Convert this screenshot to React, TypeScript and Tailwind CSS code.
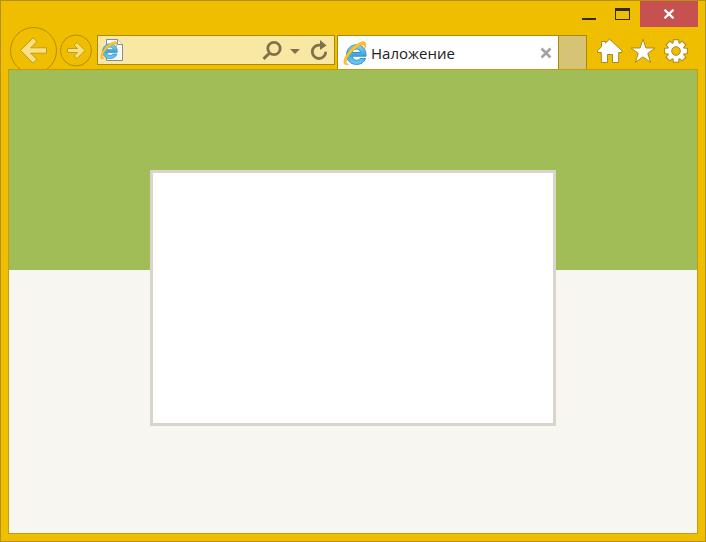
import React from "react";

function ExplorerMark() {
  return (
    <>
      <defs>
        <linearGradient id="explorerBlue" x1="0" y1="0" x2="0" y2="1">
          <stop offset="0" stopColor="#8ad8f5" />
          <stop offset="0.5" stopColor="#3fa9df" />
          <stop offset="1" stopColor="#6fd0f3" />
        </linearGradient>
      </defs>
      <path
        d="M23 15.200H9.200c.3 2.500 2 4 4.300 4 1.700 0 2.900-.6 3.700-1.800h5.300c-1.300 3.900-4.600 6-9.100 6-5.900 0-9.800-4-9.800-9.600S7.600 3.800 13.400 3.800c6.100 0 10 4.400 9.600 11.400zM9.300 11.500h8.200c-.3-2.200-1.900-3.500-4.100-3.500s-3.800 1.300-4.100 3.500z"
        fill="url(#explorerBlue)"
        stroke="#2c86bd"
        strokeWidth="0.9"
      />
      <path
        d="M5.500 23.300C.5 25.500-.3 20.600 2.800 15 6.300 8.700 13 2.700 18.300 1.100c3.700-1.100 5.300.8 4.300 4.400-.2.800-.4 1.300-.8 2 .3-2.800-.4-4-2.600-3.500C14.800 5 8.100 10.700 4.900 16.200c-2.200 3.800-2.200 6.500.6 7.100z"
        fill="#fdc62c"
        stroke="#e3a41b"
        strokeWidth="0.5"
      />
    </>
  );
}

function TitleBar() {
  return (
    <header className="flex h-[26px] justify-end">
      <button type="button" aria-label="Свернуть" className="flex w-[34px] items-center justify-center">
        <svg width="34" height="26" aria-hidden="true">
          <path d="M10 17h14v2H10z" fill="#302b22" />
        </svg>
      </button>
      <button type="button" aria-label="Развернуть" className="flex w-[34px] items-center justify-center">
        <svg width="34" height="26" aria-hidden="true">
          <path d="M9 7h15v12H9zM10 10v8h13v-8z" fill="#302b22" fillRule="evenodd" />
        </svg>
      </button>
      <button type="button" aria-label="Закрыть" className="flex w-[58px] items-center justify-center bg-[#c75050]">
        <svg width="12" height="10" viewBox="0 0 12 10" aria-hidden="true">
          <path d="M1.500 .7L10.500 9.300M10.500 .7L1.500 9.300" stroke="#fff" strokeWidth="2.300" />
        </svg>
      </button>
    </header>
  );
}

function AddressBar() {
  return (
    <div className="mt-2 flex h-[30px] min-w-0 flex-1 items-center border border-[#ad8908] bg-[#f9e7a4]">
      <svg width="28" height="28" viewBox="0 0 28 28" className="shrink-0" aria-hidden="true">
        <path d="M8.500 3.500h11l5 5v16h-16z" fill="#f6f8fb" stroke="#8c8c8c" />
        <path d="M19.500 3.500v5h5" fill="#fff" stroke="#8c8c8c" />
        <svg x="2" y="5" width="18" height="18" viewBox="0 0 24 24">
          <ExplorerMark />
        </svg>
      </svg>
      <input type="text" aria-label="Адрес" className="h-full min-w-0 flex-1 bg-transparent px-1 text-sm outline-none" />
      <button type="button" aria-label="Поиск" className="shrink-0">
        <svg width="24" height="28" viewBox="0 0 24 28" aria-hidden="true">
          <circle cx="12" cy="12.500" r="6.200" fill="none" stroke="#7f7248" strokeWidth="2.800" />
          <path d="M7.600 17L1.500 22.800" stroke="#7f7248" strokeWidth="3" />
        </svg>
      </button>
      <button type="button" aria-label="Журнал" className="shrink-0">
        <svg width="22" height="28" viewBox="0 0 22 28" aria-hidden="true">
          <path d="M4 13h10l-5 5z" fill="#7f7248" />
        </svg>
      </button>
      <button type="button" aria-label="Обновить" className="shrink-0">
        <svg width="26" height="28" viewBox="0 0 26 28" aria-hidden="true">
          <path d="M13 9.100h-2a6.700 6.700 0 1 0 6.700 6.700" fill="none" stroke="#7f7248" strokeWidth="2.800" />
          <path d="M12 4l6.500 5.500L12 14z" fill="#7f7248" />
        </svg>
      </button>
    </div>
  );
}

const gearAngles = [0, 45, 90, 135, 180, 225, 270, 315];

function GearTeeth() {
  return (
    <>
      <circle cx="14" cy="16" r="8" />
      {gearAngles.map((angle) => (
        <path key={angle} d="M11.500 9l.3-3.800h4.400l.3 3.800z" transform={`rotate(${angle} 14 16)`} />
      ))}
    </>
  );
}

function Toolbar() {
  return (
    <nav aria-label="Навигация" className="flex h-[42px] items-start overflow-hidden pl-0.5">
      <button type="button" aria-label="Назад" className="shrink-0">
        <svg width="47" height="47" viewBox="0 0 47 47" aria-hidden="true">
          <circle cx="23.500" cy="23.500" r="23" fill="none" stroke="#b28d06" />
          <path
            d="M10.500 23.500L23 10.900l3.900 3.700-6.200 6.200H36.500v5.400H20.700l6.200 6.200L23 36.100z"
            fill="#f9e085"
            stroke="#c29d18"
          />
        </svg>
      </button>
      <button type="button" aria-label="Вперёд" className="mt-[7px] ml-[3px] shrink-0">
        <svg width="32" height="33" viewBox="0 0 32 33" aria-hidden="true">
          <circle cx="16" cy="16.500" r="15.500" fill="none" stroke="#b28d06" />
          <path
            d="M25 16.500L17 8.500l-2.900 2.700 3.400 3.300H7.500v4h10l-3.400 3.300 2.900 2.700z"
            fill="#f9e085"
            stroke="#c29d18"
          />
        </svg>
      </button>
      <div className="ml-[5px] flex min-w-0 flex-1 gap-0.5">
        <AddressBar />
        <div className="mt-2 flex h-[34px] shrink-0">
          <div className="flex w-[222px] items-center border border-b-0 border-[#ad8908] bg-white pl-[5px]">
            <svg viewBox="0 0 24 24" className="size-6 shrink-0" aria-hidden="true">
              <ExplorerMark />
            </svg>
            <span className="flex-1 truncate pl-1 font-['Open_Sans','Noto_Sans',sans-serif] text-[15px] leading-5 text-[#222]">
              Наложение
            </span>
            <button type="button" aria-label="Закрыть вкладку" className="flex w-6 justify-center">
              <svg width="12" height="12" viewBox="0 0 12 12" aria-hidden="true">
                <path d="M1.500 1.500l9 9M10.500 1.500l-9 9" stroke="#a3a3a3" strokeWidth="2.600" />
              </svg>
            </button>
          </div>
          <button
            type="button"
            aria-label="Новая вкладка"
            className="w-7 border border-b-0 border-l-0 border-[#ad8908] bg-[#d7c376]"
          />
        </div>
      </div>
      <div className="mt-2 ml-[9px] flex shrink-0 gap-[5px] pr-2">
        <button type="button" aria-label="Домой">
          <svg width="28" height="32" viewBox="0 0 28 32" aria-hidden="true">
            <path
              d="M13.500 4.200L9.500 8V6.500h-4v5.300L1.500 15.700v1.800h3.800v10h6.200v-8h5v8h6.200v-10h3.300v-1.800z"
              fill="#fff"
              stroke="#a98921"
            />
          </svg>
        </button>
        <button type="button" aria-label="Избранное">
          <svg width="28" height="32" viewBox="0 0 28 32" aria-hidden="true">
            <path
              d="M14 4.300l3 8.700h9l-7.200 5.400 2.800 8.900-7.600-5.400-7.600 5.400 2.800-8.900L2 13h9z"
              fill="#fff"
              stroke="#a98921"
            />
          </svg>
        </button>
        <button type="button" aria-label="Сервис">
          <svg width="28" height="32" viewBox="0 0 28 32" aria-hidden="true">
            <g stroke="#a98921" strokeWidth="2" fill="#fff">
              <GearTeeth />
            </g>
            <g fill="#fff">
              <GearTeeth />
            </g>
            <circle cx="14" cy="16" r="4.300" fill="#f0be00" stroke="#a98921" />
          </svg>
        </button>
      </div>
    </nav>
  );
}

export default function App() {
  return (
    <div className="flex min-h-screen flex-col border border-[#b5910c] bg-[#f0be00] px-[7px] pb-[7px]">
      <TitleBar />
      <Toolbar />
      <main className="flex-1 border border-[#c39d0b] bg-[#f7f6f1]">
        <div className="h-[200px] bg-[#a0bd58]" />
        <div className="relative mx-auto -mt-[100px] h-64 w-[406px] max-w-full border-3 border-[#d9d5cd] bg-white" />
      </main>
    </div>
  );
}
